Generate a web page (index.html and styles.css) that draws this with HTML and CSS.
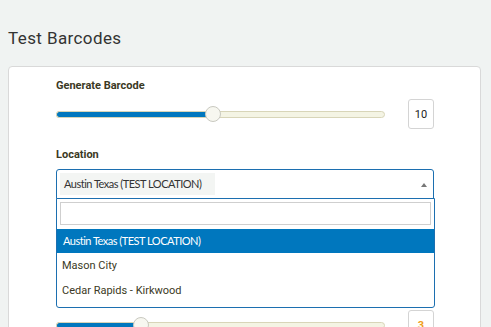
FILE: index.html
```html
<!DOCTYPE html>
<html>
<head>
<meta charset="utf-8">
<link rel="stylesheet" href="styles.css">
</head>
<body>
<div class="page">
  <h1 class="title">Test Barcodes</h1>
  <div class="card">
    <div class="field-label">Generate Barcode</div>
    <div class="slider-row">
      <div class="slider">
        <div class="track"></div>
        <div class="fill" style="width: 47.5%"></div>
        <div class="thumb" style="left: 47.5%"></div>
      </div>
      <div class="num-box">10</div>
    </div>

    <div class="field-label loc-label">Location</div>
    <div class="select-wrap">
      <div class="select">
        <span class="select-value">Austin Texas (TEST LOCATION)</span>
        <span class="arrow"></span>
      </div>
      <div class="dropdown">
        <div class="search-box"><div class="search-input"></div></div>
        <div class="option active">Austin Texas (TEST LOCATION)</div>
        <div class="option">Mason City</div>
        <div class="option">Cedar Rapids - Kirkwood</div>
      </div>
    </div>

    <div class="slider-row second">
      <div class="slider">
        <div class="track"></div>
        <div class="fill" style="width: 25.5%"></div>
        <div class="thumb" style="left: 25.5%"></div>
      </div>
      <div class="num-box orange">3</div>
    </div>
  </div>
</div>
</body>
</html>
```

FILE: styles.css
```css
html, body {
  margin: 0;
  padding: 0;
  background: #f0f3f2;
  overflow: hidden;
  height: 327px;
}

.page {
  padding: 0 10px 0 8px;
  font-family: Roboto, "Liberation Sans", sans-serif;
}

.title {
  margin: 0;
  padding-top: 28px;
  font-size: 17px;
  font-weight: 400;
  color: #333;
  letter-spacing: 0.4px;
  line-height: 20px;
  height: 38px;
}

.card {
  background: #fff;
  border: 1px solid #d9d9d9;
  border-radius: 4px;
  padding: 12px 46px 20px 47px;
  height: 300px;
}

.field-label {
  font-size: 11px;
  font-weight: 700;
  color: #3b3924;
  line-height: 14px;
  height: 14px;
}

.slider-row {
  display: flex;
  align-items: center;
  margin-top: 6px;
  gap: 23px;
}

.slider {
  position: relative;
  width: 329px;
  height: 30px;
}

.track {
  position: absolute;
  left: 0;
  right: 0;
  top: 12px;
  height: 5px;
  border: 1px solid #d8d5b8;
  background: #f4f4e4;
  border-radius: 4px;
}

.fill {
  position: absolute;
  left: 0;
  top: 12px;
  height: 5px;
  border: 1px solid #d8d5b8;
  border-right: none;
  background: #0077be;
  border-radius: 4px 0 0 4px;
}

.thumb {
  position: absolute;
  top: 7px;
  width: 14px;
  height: 14px;
  margin-left: -7px;
  border-radius: 50%;
  background: #f7f7f0;
  border: 1px solid #c9c9c0;
}

.num-box {
  width: 24px;
  height: 28px;
  border: 1px solid #d4d4d4;
  border-radius: 3px;
  font-size: 11px;
  color: #222;
  display: flex;
  align-items: center;
  justify-content: center;
}

.num-box.orange {
  color: #f0a020;
  font-weight: 700;
}

.loc-label {
  margin-top: 19px;
}

.select-wrap {
  position: relative;
  margin-top: 7px;
  width: 378px;
}

.select {
  height: 28px;
  border: 1px solid #1c6fb0;
  border-radius: 3px 3px 0 0;
  display: flex;
  align-items: center;
  padding: 0 3px;
  font-family: Lato, "Open Sans", sans-serif;
  font-size: 11px;
  letter-spacing: -0.5px;
  color: #333;
}

.select-value {
  background: #f3f5f3;
  padding: 5px 4px 6px 4px;
  width: 155px;
  box-sizing: border-box;
  white-space: nowrap;
  line-height: 11px;
}

.arrow {
  margin-left: auto;
  margin-right: 3px;
  margin-top: 2px;
  width: 0;
  height: 0;
  border-left: 3px solid transparent;
  border-right: 3px solid transparent;
  border-bottom: 4px solid #777;
}

.dropdown {
  position: absolute;
  left: 0;
  right: -1px;
  top: 29px;
  height: 108px;
  background: #fff;
  border: 1px solid #1c6fb0;
  border-radius: 0 0 3px 3px;
  z-index: 2;
}

.search-box {
  padding: 3px 3px 4px 3px;
}

.search-input {
  height: 21px;
  border: 1px solid #cfcfcf;
}

.option {
  height: 24px;
  line-height: 24px;
  padding-left: 5px;
  font-size: 11px;
  color: #3b3924;
  font-family: Roboto, "Liberation Sans", sans-serif;
}

.option + .option {
  height: 25px;
  line-height: 25px;
}

.option.active {
  background: #0077be;
  color: #fff;
  font-family: Lato, "Open Sans", sans-serif;
  letter-spacing: -0.5px;
  padding-left: 6px;
}

.slider-row.second {
  margin-top: 111px;
}
```
